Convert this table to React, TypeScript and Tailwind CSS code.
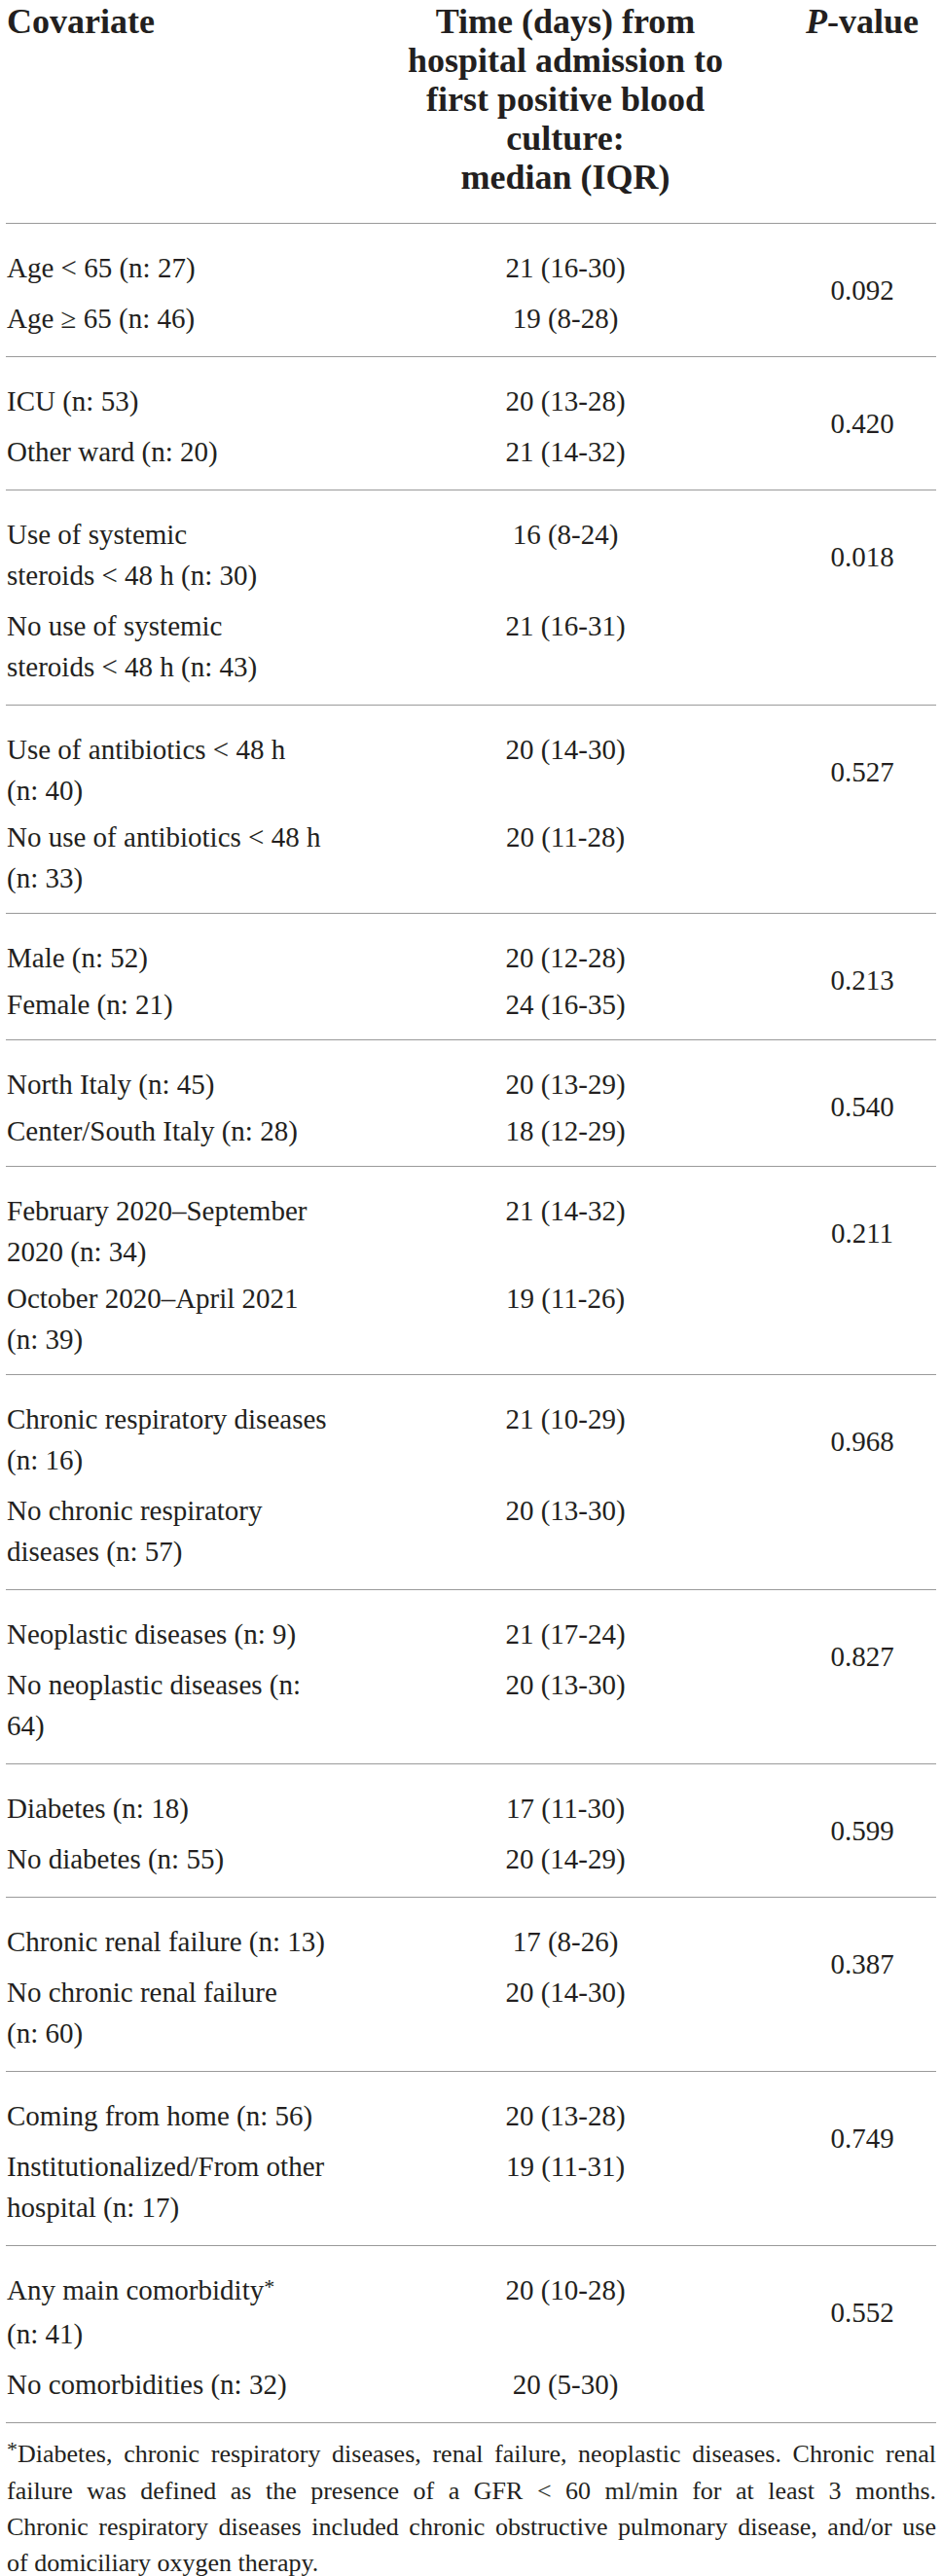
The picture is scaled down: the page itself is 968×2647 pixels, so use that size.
import type { ReactNode } from "react";

type SubRow = { label: string[]; value: string };
type Group = { rows: SubRow[]; p: string; tight?: boolean };

const groups: Group[] = [
  {
    rows: [
      { label: ["Age < 65 (n: 27)"], value: "21 (16-30)" },
      { label: ["Age ≥ 65 (n: 46)"], value: "19 (8-28)" },
    ],
    p: "0.092",
  },
  {
    rows: [
      { label: ["ICU (n: 53)"], value: "20 (13-28)" },
      { label: ["Other ward (n: 20)"], value: "21 (14-32)" },
    ],
    p: "0.420",
  },
  {
    rows: [
      { label: ["Use of systemic", "steroids < 48 h (n: 30)"], value: "16 (8-24)" },
      { label: ["No use of systemic", "steroids < 48 h (n: 43)"], value: "21 (16-31)" },
    ],
    p: "0.018",
  },
  {
    rows: [
      { label: ["Use of antibiotics < 48 h", "(n: 40)"], value: "20 (14-30)" },
      { label: ["No use of antibiotics < 48 h", "(n: 33)"], value: "20 (11-28)" },
    ],
    p: "0.527",
    tight: true,
  },
  {
    rows: [
      { label: ["Male (n: 52)"], value: "20 (12-28)" },
      { label: ["Female (n: 21)"], value: "24 (16-35)" },
    ],
    p: "0.213",
    tight: true,
  },
  {
    rows: [
      { label: ["North Italy (n: 45)"], value: "20 (13-29)" },
      { label: ["Center/South Italy (n: 28)"], value: "18 (12-29)" },
    ],
    p: "0.540",
    tight: true,
  },
  {
    rows: [
      { label: ["February 2020–September", "2020 (n: 34)"], value: "21 (14-32)" },
      { label: ["October 2020–April 2021", "(n: 39)"], value: "19 (11-26)" },
    ],
    p: "0.211",
    tight: true,
  },
  {
    rows: [
      { label: ["Chronic respiratory diseases", "(n: 16)"], value: "21 (10-29)" },
      { label: ["No chronic respiratory", "diseases (n: 57)"], value: "20 (13-30)" },
    ],
    p: "0.968",
  },
  {
    rows: [
      { label: ["Neoplastic diseases (n: 9)"], value: "21 (17-24)" },
      { label: ["No neoplastic diseases (n:", "64)"], value: "20 (13-30)" },
    ],
    p: "0.827",
  },
  {
    rows: [
      { label: ["Diabetes (n: 18)"], value: "17 (11-30)" },
      { label: ["No diabetes (n: 55)"], value: "20 (14-29)" },
    ],
    p: "0.599",
  },
  {
    rows: [
      { label: ["Chronic renal failure (n: 13)"], value: "17 (8-26)" },
      { label: ["No chronic renal failure", "(n: 60)"], value: "20 (14-30)" },
    ],
    p: "0.387",
  },
  {
    rows: [
      { label: ["Coming from home (n: 56)"], value: "20 (13-28)" },
      { label: ["Institutionalized/From other", "hospital (n: 17)"], value: "19 (11-31)" },
    ],
    p: "0.749",
  },
  {
    rows: [
      { label: ["Any main comorbidity*", "(n: 41)"], value: "20 (10-28)" },
      { label: ["No comorbidities (n: 32)"], value: "20 (5-30)" },
    ],
    p: "0.552",
  },
];

const footnote = [
  "*Diabetes, chronic respiratory diseases, renal failure, neoplastic diseases. Chronic renal",
  "failure was defined as the presence of a GFR < 60 ml/min for at least 3 months.",
  "Chronic respiratory diseases included chronic obstructive pulmonary disease, and/or use",
];

// the asterisk sits a little higher in the source typesetting
function withStar(text: string): ReactNode {
  if (!text.includes("*")) return text;
  const parts = text.split("*");
  return (
    <>
      {parts[0]}
      <span className="relative -top-[6px] text-[22px]">*</span>
      {parts[1]}
    </>
  );
}

export default function App() {
  return (
    <div className="min-h-screen bg-white px-[6px] font-['Liberation_Serif','Times_New_Roman',serif] text-[#231f20]">
      {/* Cabeçalho */}
      <div className="grid grid-cols-[346px_1fr_152px] border-b border-[#9a9a9a] pt-[2px] pb-[27px] text-[36px] font-bold leading-[40px]">
        <div className="pl-px">Covariate</div>
        <div className="text-center">
          Time (days) from
          <br />
          hospital admission to
          <br />
          first positive blood
          <br />
          culture:
          <br />
          median (IQR)
        </div>
        <div className="text-center">
          <span className="italic">P</span>-value
        </div>
      </div>

      {/* Linhas */}
      {groups.map((g) => (
        <div
          key={g.p}
          className={`grid grid-cols-[346px_1fr_152px] border-b border-[#9a9a9a] pt-[24px] text-[29px] leading-[42px] ${
            g.tight ? "pb-[15px]" : "pb-[18px]"
          }`}
        >
          <div className={`col-span-2 flex flex-col ${g.tight ? "gap-[6px]" : "gap-[10px]"}`}>
            {g.rows.map((r) => (
              <div key={r.value + r.label[0]} className="grid grid-cols-[346px_1fr]">
                <div className="pl-px whitespace-nowrap">
                  {r.label.map((l) => (
                    <div key={l}>{withStar(l)}</div>
                  ))}
                </div>
                <div className="text-center">{r.value}</div>
              </div>
            ))}
          </div>
          <div className="pt-[23px] text-center">{g.p}</div>
        </div>
      ))}

      {/* Nota */}
      <div className="pl-px pt-[13px] text-[26px] leading-[37px]">
        {footnote.map((l) => (
          <div key={l} className="whitespace-nowrap text-justify [text-align-last:justify]">
            {withStar(l)}
          </div>
        ))}
        <div>of domiciliary oxygen therapy.</div>
      </div>
    </div>
  );
}
